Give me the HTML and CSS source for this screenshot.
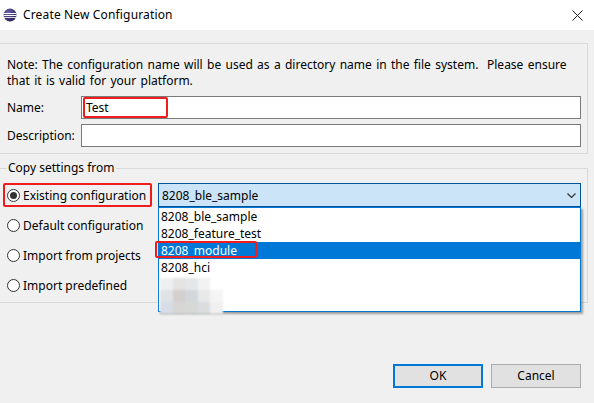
FILE: index.html
```html
<!DOCTYPE html>
<html lang="en">
<head>
<meta charset="utf-8">
<title>Create New Configuration</title>
<link rel="stylesheet" href="styles.css">
</head>
<body>
<div class="window">
  <header class="titlebar">
    <svg class="app-icon" width="14" height="14" viewBox="0 0 14 14">
      <defs>
        <radialGradient id="sph" cx="0.35" cy="0.3" r="0.8">
          <stop offset="0" stop-color="#6a62a8"/>
          <stop offset="1" stop-color="#241d52"/>
        </radialGradient>
      </defs>
      <circle cx="7" cy="7" r="6.5" fill="url(#sph)"/>
      <rect x="0.5" y="5" width="13" height="1" fill="#fff"/>
      <rect x="0.5" y="7" width="13" height="1" fill="#fff"/>
      <rect x="1" y="9" width="12" height="0.8" fill="#fff"/>
    </svg>
    <span class="title">Create New Configuration</span>
    <svg class="close" width="11" height="11" viewBox="0 0 11 11">
      <path d="M0.5 0.5 L10.5 10.5 M10.5 0.5 L0.5 10.5" stroke="#222" stroke-width="1" fill="none"/>
    </svg>
  </header>

  <main class="content">
    <section class="panel">
      <p class="note">Note: The configuration name will be used as a directory name in the file system.&nbsp; Please ensure<br>that it is valid for your platform.</p>
      <div class="field">
        <label class="field-label">Name:</label>
        <div class="input">Test<span class="mark mark-name"></span></div>
      </div>
      <div class="field">
        <label class="field-label">Description:</label>
        <div class="input"></div>
      </div>
    </section>

    <fieldset class="group">
      <legend class="legend">Copy settings from</legend>
      <div class="row">
        <div class="radio-wrap">
          <span class="radio checked"></span><span class="radio-text">Existing configuration</span>
          <span class="mark mark-radio"></span>
        </div>
        <div class="combo-wrap">
          <div class="combo">
            <span>8208_ble_sample</span>
            <svg class="chevron" width="9" height="5" viewBox="0 0 9 5"><path d="M0.5 0.5 L4.5 4.5 L8.5 0.5" stroke="#333" stroke-width="1.2" fill="none"/></svg>
          </div>
          <ul class="list">
            <li class="item">8208_ble_sample</li>
            <li class="item">8208_feature_test</li>
            <li class="item selected">8208_module<span class="mark mark-item"></span></li>
            <li class="item">8208_hci</li>
            <li class="blur">
              <span class="b b1"></span><span class="b b2"></span><span class="b b3"></span><span class="b b4"></span><span class="b b5"></span>
              <span class="b b6"></span><span class="b b7"></span><span class="b b8"></span><span class="b b9"></span><span class="b b10"></span>
              <span class="b b11"></span><span class="b b12"></span><span class="b b13"></span><span class="b b14"></span><span class="b b15"></span>
            </li>
          </ul>
        </div>
      </div>
      <div class="row">
        <div class="radio-wrap"><span class="radio"></span><span class="radio-text">Default configuration</span></div>
      </div>
      <div class="row">
        <div class="radio-wrap"><span class="radio"></span><span class="radio-text">Import from projects</span></div>
      </div>
      <div class="row">
        <div class="radio-wrap"><span class="radio"></span><span class="radio-text">Import predefined</span></div>
      </div>
    </fieldset>
  </main>

  <footer class="buttons">
    <button class="btn btn-default">OK</button>
    <button class="btn">Cancel</button>
  </footer>
</div>
</body>
</html>
```

FILE: styles.css
```css
* { box-sizing: border-box; }

html, body {
  margin: 0;
  padding: 0;
}

body {
  background: #f0f0f0;
  font-family: "Noto Sans", "Open Sans", sans-serif;
  font-size: 12px;
  color: #000;
  width: 594px;
  height: 403px;
  overflow: hidden;
}

.window {
  width: 594px;
  height: 403px;
}

.titlebar {
  height: 30px;
  background: #fff;
  display: flex;
  align-items: center;
  padding-left: 3px;
}

.app-icon {
  flex: none;
}

.title {
  margin-left: 6px;
  font-size: 12px;
  line-height: 16px;
  letter-spacing: 0.15px;
}

.close {
  margin-left: auto;
  margin-right: 11px;
}

.content {
  width: 588px;
  margin-top: 13px;
}

.panel {
  border: 1px solid #d9d9d9;
  border-left: none;
  padding: 13px 6px 6px 7px;
}

.note {
  margin: 0;
  line-height: 16px;
  white-space: nowrap;
  word-spacing: 1.2px;
}

.field {
  display: flex;
  align-items: center;
  height: 23px;
  margin-top: 5px;
}

.note + .field {
  margin-top: 7px;
}

.field-label {
  width: 74px;
  flex: none;
}

.input {
  position: relative;
  flex: 1;
  height: 23px;
  background: #fff;
  border: 1px solid #7a7a7a;
  padding-left: 4px;
  line-height: 21px;
}

.mark {
  position: absolute;
  border: 2px solid #ee1c1c;
  border-radius: 2px;
  pointer-events: none;
}

.mark-name {
  left: 1px;
  top: 0px;
  width: 85px;
  height: 21px;
}

.group {
  margin: 6px 0 0 0;
  padding: 7px 6px 5px 7px;
  border: 1px solid #d9d9d9;
  border-left: none;
  min-width: 0;
}

.legend {
  padding: 0 1px;
  margin-left: 0;
  line-height: 16px;
}

.row {
  display: flex;
  align-items: center;
  height: 24px;
  margin-top: 6px;
}

.legend + .row {
  margin-top: 0;
}

.radio-wrap {
  position: relative;
  width: 151px;
  flex: none;
  display: flex;
  align-items: center;
  height: 24px;
}

.radio {
  width: 13px;
  height: 13px;
  border: 1px solid #333;
  border-radius: 50%;
  background: #fff;
  display: flex;
  align-items: center;
  justify-content: center;
  flex: none;
}

.radio.checked::after {
  content: "";
  width: 7px;
  height: 7px;
  border-radius: 50%;
  background: #333;
}

.radio-text {
  margin-left: 3px;
  white-space: nowrap;
}

.mark-radio {
  left: -4px;
  top: 0;
  width: 149px;
  height: 24px;
}

.combo-wrap {
  position: relative;
  flex: 1;
  height: 24px;
}

.combo {
  height: 24px;
  background: #cce4f7;
  border: 1px solid #005499;
  display: flex;
  align-items: center;
  padding-left: 3px;
  padding-right: 4px;
}

.chevron {
  margin-left: auto;
}

.list {
  position: absolute;
  left: 0;
  right: 0;
  top: 24px;
  height: 105px;
  margin: 0;
  padding: 0;
  list-style: none;
  background: #fff;
  border: 1px solid #0078d7;
  box-shadow: 2px 2px 2px rgba(0, 0, 0, 0.35);
  z-index: 5;
}

.item {
  position: relative;
  height: 17px;
  line-height: 17px;
  padding-left: 2px;
}

.item.selected {
  background: #0078d7;
  color: #fff;
}

.mark-item {
  left: -4px;
  top: -1px;
  width: 102px;
  height: 17px;
}

.blur {
  position: absolute;
  left: 1px;
  top: 70px;
  width: 63px;
  height: 36px;
  display: grid;
  grid-template-columns: repeat(5, 12.6px);
  grid-template-rows: repeat(3, 12px);
  filter: blur(1.2px);
}

.b { display: block; }
.b1 { background: #eef0f2; }
.b2 { background: #e6e3e3; }
.b3 { background: #e4e6e8; }
.b4 { background: #f2f2f2; }
.b5 { background: #ffffff; }
.b6 { background: #dfe2e6; }
.b7 { background: #d5cece; }
.b8 { background: #d3d7db; }
.b9 { background: #e8e8e8; }
.b10 { background: #f4f4f4; }
.b11 { background: #d6dde4; }
.b12 { background: #d7d5d6; }
.b13 { background: #d6d8d6; }
.b14 { background: #d9dde0; }
.b15 { background: #f0f0f0; }

.buttons {
  display: flex;
  justify-content: flex-end;
  gap: 8px;
  padding-right: 13px;
  margin-top: 61px;
}

.btn {
  width: 90px;
  height: 24px;
  background: #e1e1e1;
  border: 1px solid #adadad;
  font-family: inherit;
  font-size: 12px;
  color: #000;
  padding: 0;
  line-height: 20px;
}

.btn-default {
  border: 2px solid #0078d7;
}
```
